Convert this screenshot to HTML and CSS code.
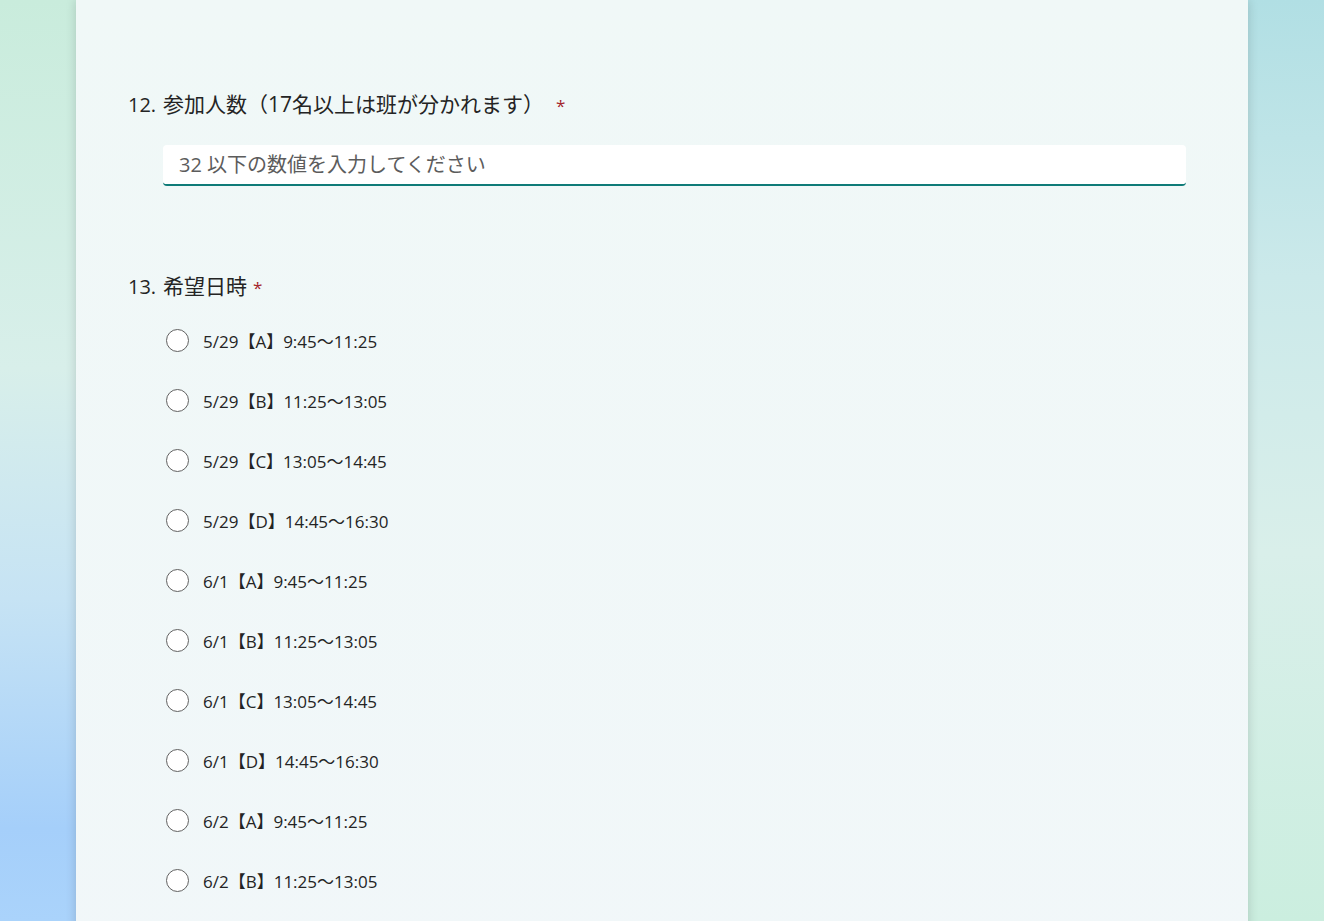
FILE: index.html
```html
<!DOCTYPE html>
<html lang="ja">
<head>
  <meta charset="UTF-8" />
  <meta name="viewport" content="width=device-width, initial-scale=1.0"/>
  <title>申込フォーム</title>
  <link rel="stylesheet" href="styles.css">
</head>
<body>

<main class="form-card">

  <section class="question">
    <div class="q-title">
      <span class="q-num">12.</span>
      <span class="q-text">参加人数（17名以上は班が分かれます）</span>
      <span class="required">*</span>
    </div>
    <div class="q-body">
      <input class="text-input" type="text" placeholder="32 以下の数値を入力してください" />
    </div>
  </section>

  <section class="question">
    <div class="q-title">
      <span class="q-num">13.</span>
      <span class="q-text">希望日時</span>
      <span class="required tight">*</span>
    </div>
    <div class="q-body options">
      <label class="option"><span class="radio"></span>5/29【A】9:45〜11:25</label>
      <label class="option"><span class="radio"></span>5/29【B】11:25〜13:05</label>
      <label class="option"><span class="radio"></span>5/29【C】13:05〜14:45</label>
      <label class="option"><span class="radio"></span>5/29【D】14:45〜16:30</label>
      <label class="option"><span class="radio"></span>6/1【A】9:45〜11:25</label>
      <label class="option"><span class="radio"></span>6/1【B】11:25〜13:05</label>
      <label class="option"><span class="radio"></span>6/1【C】13:05〜14:45</label>
      <label class="option"><span class="radio"></span>6/1【D】14:45〜16:30</label>
      <label class="option"><span class="radio"></span>6/2【A】9:45〜11:25</label>
      <label class="option"><span class="radio"></span>6/2【B】11:25〜13:05</label>
    </div>
  </section>

</main>

</body>
</html>
```

FILE: styles.css
```css
html, body {
  margin: 0;
  padding: 0;
  height: 100%;
  overflow: hidden;
}
body {
  font-family: 'Open Sans', 'Noto Sans CJK JP', sans-serif;
  color: #242424;
  background:
    linear-gradient(180deg, #c9ecdc 0%, #d8efea 40%, #c6e3f4 65%, #a5cffa 90%, #aad3fb 100%) left top / 50% 100% no-repeat,
    linear-gradient(180deg, #b1dfe4 0%, #cbe9ea 30%, #d9efea 60%, #cbeedf 100%) right top / 50% 100% no-repeat;
}
.form-card {
  width: 1172px;
  min-height: 1000px;
  margin: 0 auto;
  box-sizing: border-box;
  padding: 90px 62px 0 52px;
  background: linear-gradient(180deg, #f0f8f7, #f1f7f9);
  box-shadow: 0 0 10px rgba(0, 0, 0, 0.16);
}
.question {
  margin-bottom: 86px;
}
.q-title {
  display: flex;
  align-items: baseline;
  font-size: 21px;
  line-height: 28px;
}
.q-num {
  width: 35px;
  flex: none;
}
.q-num, .required {
  font-size: 20px;
}
.required {
  color: #a4262c;
  font-size: 17px;
  margin-left: 12px;
}
.required.tight {
  margin-left: 6px;
}
.q-body {
  padding-left: 35px;
}
.text-input {
  display: block;
  width: 100%;
  box-sizing: border-box;
  height: 41px;
  margin-top: 25px;
  padding: 0 16px;
  border: none;
  border-bottom: 2px solid #0f7b78;
  border-radius: 4px;
  background: #fff;
  font-family: inherit;
  font-size: 20px;
  outline: none;
}
.text-input::placeholder {
  color: #5c5c5c;
}
.options {
  margin-top: 8px;
}
.option {
  display: flex;
  align-items: center;
  height: 60px;
  font-size: 17px;
  color: #242424;
}
.radio {
  width: 21px;
  height: 21px;
  border: 1.5px solid #616161;
  border-radius: 50%;
  margin-left: 3px;
  margin-right: 14px;
  background: #fff;
  flex: none;
}
```
